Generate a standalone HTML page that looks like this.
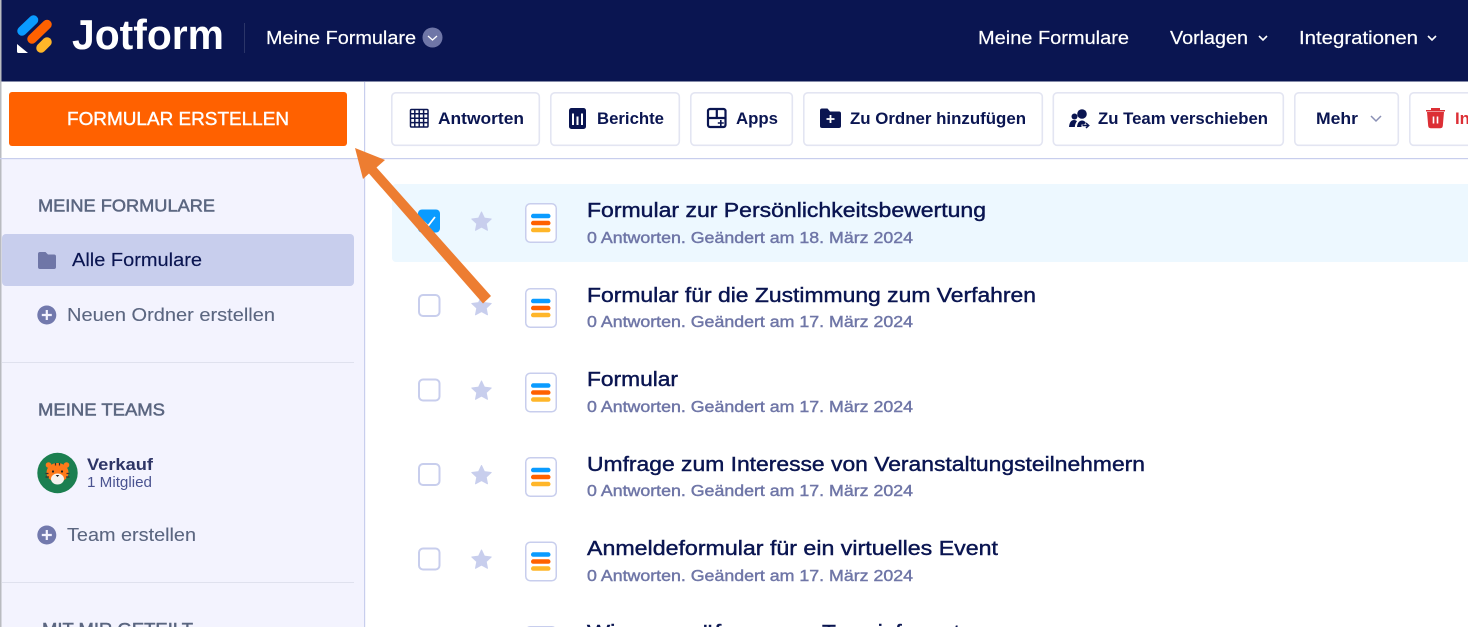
<!DOCTYPE html>
<html lang="de"><head><meta charset="utf-8"><title>Jotform</title>
<style>
html,body{margin:0;padding:0;width:1468px;height:627px;overflow:hidden;background:#fff}
svg{display:block;overflow:hidden}
text{font-family:"Liberation Sans",sans-serif}
.t{font-size:20px;fill:#0a1551;stroke:#0a1551;stroke-width:.42px}
.s{font-size:15.5px;fill:#6f76a7;stroke:#6f76a7;stroke-width:.42px}
.b{font-size:16.5px;fill:#0a1551;font-weight:700}
.n{font-size:18.5px;fill:#fff;stroke:#fff;stroke-width:.2px}
.h{font-size:17.5px;fill:#5b6680;stroke:#5b6680;stroke-width:.5px}
.l{font-size:18.5px;fill:#5b6680;stroke:#5b6680;stroke-width:.1px}
.btn{fill:#fff;stroke:#e3e5f2;stroke-width:1.6px}
</style></head><body>
<svg width="1468" height="627" viewBox="0 0 1468 627" xmlns="http://www.w3.org/2000/svg">
<defs>
<g id="form"><rect x=".75" y=".75" width="30.5" height="38.5" rx="4.500" fill="#fff" stroke="#c8ceed" stroke-width="1.500"/><rect x="6" y="10.800" width="19.500" height="4.500" rx="2.200" fill="#0a9bff"/><rect x="6" y="17.800" width="19.500" height="4.500" rx="2.200" fill="#ff6100"/><rect x="6" y="24.800" width="19.500" height="4.500" rx="2.200" fill="#ffb629"/></g>
<path id="star" d="M0-9.500 2.900-3.400 9.700-2.500 4.700 2.100 6 8.800 0 5.500-6 8.800-4.700 2.100-9.700-2.500-2.900-3.400Z" fill="#c8ceed" stroke="#c8ceed" stroke-width="1" stroke-linejoin="round"/>
<rect id="cb" x="1" y="1" width="20.500" height="21" rx="4" fill="#fff" stroke="#c8ceed" stroke-width="2"/>
<g id="plus"><circle r="9.500" fill="#7279ad"/><path d="M-5 0H5M0-5V5" stroke="#f3f3fe" stroke-width="2.200"/></g>
</defs>

<!-- sidebar -->
<rect x="0" y="159" width="365" height="468" fill="#f3f3fe"/>
<rect x="0" y="82" width="1.500" height="545" fill="#b9bbc0"/>
<rect x="364" y="82" width="1.200" height="545" fill="#c8ceed"/>
<rect x="0" y="158" width="1468" height="1.200" fill="#c8ceed"/>

<!-- header -->
<rect x="1.500" y="0" width="1467" height="81.500" fill="#0a1551"/>
<rect x="0" y="0" width="1.500" height="82" fill="#b9bbc0"/>
<g stroke-linecap="round" fill="none">
<path d="M22 31 33.500 20" stroke="#0a9bff" stroke-width="9.500"/>
<path d="M32 39 47 24.500" stroke="#ff6100" stroke-width="9.500"/>
<path d="M41 48 47 42" stroke="#ffb629" stroke-width="9.500"/>
</g>
<path d="M17 44 28 53H18.500Q17 53 17 51.500Z" fill="#fff"/>
<text x="72" y="49" font-size="42" font-weight="700" fill="#fff" textLength="152" lengthAdjust="spacingAndGlyphs">Jotform</text>
<rect x="244" y="23" width="1" height="30" fill="#2b3568"/>
<text class="n" x="266" y="44" textLength="150" lengthAdjust="spacingAndGlyphs">Meine Formulare</text>
<circle cx="432.500" cy="37.500" r="10" fill="#6f76a7"/>
<path d="M428 36l4.500 4 4.500-4" fill="none" stroke="#fff" stroke-width="1.300"/>
<text class="n" x="978" y="44" textLength="151" lengthAdjust="spacingAndGlyphs">Meine Formulare</text>
<text class="n" x="1170" y="44" textLength="78" lengthAdjust="spacingAndGlyphs">Vorlagen</text>
<path d="M1259 36l4 4 4-4" fill="none" stroke="#fff" stroke-width="1.600"/>
<text class="n" x="1299" y="44" textLength="119" lengthAdjust="spacingAndGlyphs">Integrationen</text>
<path d="M1428 36l4 4 4-4" fill="none" stroke="#fff" stroke-width="1.600"/>

<!-- create button -->
<rect x="9" y="92" width="338" height="54" rx="3" fill="#ff6100"/>
<text x="67" y="125" font-size="18.500" fill="#fff" stroke="#fff" stroke-width=".4" textLength="222" lengthAdjust="spacingAndGlyphs">FORMULAR ERSTELLEN</text>

<!-- toolbar -->
<rect class="btn" x="391.800" y="92.800" width="147.500" height="52.500" rx="4"/>
<rect class="btn" x="550.800" y="92.800" width="128.500" height="52.500" rx="4"/>
<rect class="btn" x="690.800" y="92.800" width="101.500" height="52.500" rx="4"/>
<rect class="btn" x="803.800" y="92.800" width="238.500" height="52.500" rx="4"/>
<rect class="btn" x="1053.300" y="92.800" width="230" height="52.500" rx="4"/>
<rect class="btn" x="1294.800" y="92.800" width="103.500" height="52.500" rx="4"/>
<rect class="btn" x="1409.800" y="92.800" width="80" height="52.500" rx="4"/>

<g fill="none" stroke="#0a1551" stroke-width="1.500"><rect x="410.500" y="109.500" width="17.500" height="17.500" rx="1"/><path d="M410 113.800h18M410 118.200h18M410 122.600h18M414.800 109v18M419.200 109v18M423.600 109v18"/></g>
<text class="b" x="438" y="124" textLength="86" lengthAdjust="spacingAndGlyphs">Antworten</text>

<rect x="569" y="108" width="17" height="21" rx="2.500" fill="#0a1551"/>
<path d="M573 113.500v11.500M577.500 116.500v8.500M582 113.500v11.500" stroke="#fff" stroke-width="2"/>
<text class="b" x="597" y="124" textLength="67" lengthAdjust="spacingAndGlyphs">Berichte</text>

<rect x="708" y="109" width="17.500" height="18" rx="2" fill="none" stroke="#0a1551" stroke-width="2.200"/>
<path d="M716.800 109v10M708 118h9M716.800 118h8.700" stroke="#0a1551" stroke-width="2.200"/>
<path d="M720.800 120v6M717.800 123h6" stroke="#0a1551" stroke-width="1.600"/>
<text class="b" x="736" y="124" textLength="42" lengthAdjust="spacingAndGlyphs">Apps</text>

<path d="M820 110.500a2 2 0 0 1 2-2h5.500l2.500 3h9a2 2 0 0 1 2 2V126a2 2 0 0 1-2 2h-17a2 2 0 0 1-2-2Z" fill="#0a1551"/>
<path d="M830.500 115v8M826.500 119h8" stroke="#fff" stroke-width="1.800"/>
<text class="b" x="850" y="124" textLength="176" lengthAdjust="spacingAndGlyphs">Zu Ordner hinzufügen</text>

<circle cx="1082" cy="114" r="4.800" fill="#0a1551"/>
<circle cx="1074.500" cy="116.500" r="3" fill="#0a1551"/>
<path d="M1069 127c.5-4.500 2-7 5-7 1.500 0 2.300.5 3 1.200-1.300 1.500-2 3.500-2.200 5.800ZM1077 127c.4-4 2.200-6.500 5-6.500 1.700 0 3 .8 3.800 2.200l-1.800 1.800h-2.500v2.500Z" fill="#0a1551"/>
<path d="M1082.500 125.500h5.500M1086 123l2.700 2.500-2.700 2.500" fill="none" stroke="#0a1551" stroke-width="1.500"/>
<text class="b" x="1098" y="124" textLength="170" lengthAdjust="spacingAndGlyphs">Zu Team verschieben</text>

<text class="b" x="1316" y="124" textLength="42" lengthAdjust="spacingAndGlyphs">Mehr</text>
<path d="M1371 116l5 5 5-5" fill="none" stroke="#8a90b5" stroke-width="1.500"/>

<path d="M1427 112h17l-1.200 14a2.500 2.500 0 0 1-2.500 2.200h-9.600a2.500 2.500 0 0 1-2.500-2.200Z" fill="#dc2f35"/>
<path d="M1426 110h19v1.500h-19ZM1431 108h9v2h-9Z" fill="#dc2f35"/>
<path d="M1433.500 116.500v7M1437.500 116.500v7" stroke="#fff" stroke-width="1.600"/>
<text x="1455" y="124" font-size="16.500" font-weight="700" fill="#dc2f35" textLength="15" lengthAdjust="spacingAndGlyphs">In</text>

<!-- sidebar content -->
<text class="h" x="38" y="211.500" textLength="177" lengthAdjust="spacingAndGlyphs">MEINE FORMULARE</text>
<rect x="2" y="234" width="352" height="52" rx="4" fill="#c8ceed"/>
<path d="M38 254a2 2 0 0 1 2-2h5.500l2.500 2.500h6a2 2 0 0 1 2 2V267a2 2 0 0 1-2 2H40a2 2 0 0 1-2-2Z" fill="#6f76a7"/>
<text x="72" y="266" font-size="18.500" fill="#0a1551" stroke="#0a1551" stroke-width=".15" textLength="130" lengthAdjust="spacingAndGlyphs">Alle Formulare</text>
<use href="#plus" x="46.800" y="315"/>
<text class="l" x="67" y="321" textLength="208" lengthAdjust="spacingAndGlyphs">Neuen Ordner erstellen</text>
<rect x="2" y="362" width="352" height="1" fill="#dfe1ee"/>
<text class="h" x="38" y="415.500" textLength="127" lengthAdjust="spacingAndGlyphs">MEINE TEAMS</text>

<circle cx="57.500" cy="473" r="20.200" fill="#1b7f50"/>
<g transform="translate(57.500 474)">
<circle cx="-9" cy="-9" r="2.800" fill="#ff7a1a"/><circle cx="9" cy="-9" r="2.800" fill="#ff7a1a"/>
<ellipse cx="0" cy="-1.500" rx="11" ry="9.500" fill="#ff7a1a"/>
<ellipse cx="0" cy="5" rx="6.500" ry="5.500" fill="#f6f2ee"/>
<circle cx="-4.500" cy="-2.500" r="1.100" fill="#222"/><circle cx="4.500" cy="-2.500" r="1.100" fill="#222"/>
<path d="M-1.800 1h3.600L0 3Z" fill="#222"/>
<path d="M-2-11v2.500M2-11v2.500M-12-.5h3M-12 3h3.500M9-.5h3M8.500 3h3.500" stroke="#333" stroke-width="1.200"/>
</g>
<text x="87" y="470" font-size="17" font-weight="700" fill="#2e3566" textLength="66" lengthAdjust="spacingAndGlyphs">Verkauf</text>
<text x="87" y="487" font-size="14.500" fill="#4a5390" textLength="65" lengthAdjust="spacingAndGlyphs">1 Mitglied</text>
<use href="#plus" x="46.800" y="535"/>
<text class="l" x="67" y="541" textLength="129" lengthAdjust="spacingAndGlyphs">Team erstellen</text>
<rect x="2" y="582" width="352" height="1" fill="#dfe1ee"/>
<text class="h" x="42" y="635" textLength="151" lengthAdjust="spacingAndGlyphs">MIT MIR GETEILT</text>

<!-- list -->
<path d="M1468 184H396a4 4 0 0 0-4 4v70a4 4 0 0 0 4 4h1072Z" fill="#edf8ff"/>
<rect x="418" y="209.500" width="22" height="23" rx="4" fill="#0a9bff"/>
<path d="M424 222l4 4 7-9" fill="none" stroke="#fff" stroke-width="1.800"/>
<use href="#star" x="481.500" y="221.500"/>
<use href="#form" x="525" y="203"/>
<text class="t" x="587" y="217" textLength="399" lengthAdjust="spacingAndGlyphs">Formular zur Persönlichkeitsbewertung</text>
<text class="s" x="587" y="243" textLength="326" lengthAdjust="spacingAndGlyphs">0 Antworten. Geändert am 18. März 2024</text>

<use href="#cb" x="418" y="294"/>
<use href="#star" x="481.500" y="306"/>
<use href="#form" x="525" y="288"/>
<text class="t" x="587" y="302" textLength="449" lengthAdjust="spacingAndGlyphs">Formular für die Zustimmung zum Verfahren</text>
<text class="s" x="587" y="327" textLength="326" lengthAdjust="spacingAndGlyphs">0 Antworten. Geändert am 17. März 2024</text>

<use href="#cb" x="418" y="378.500"/>
<use href="#star" x="481.500" y="390.500"/>
<use href="#form" x="525" y="372.500"/>
<text class="t" x="587" y="386" textLength="91" lengthAdjust="spacingAndGlyphs">Formular</text>
<text class="s" x="587" y="412" textLength="326" lengthAdjust="spacingAndGlyphs">0 Antworten. Geändert am 17. März 2024</text>

<use href="#cb" x="418" y="463"/>
<use href="#star" x="481.500" y="475"/>
<use href="#form" x="525" y="457"/>
<text class="t" x="587" y="471" textLength="558" lengthAdjust="spacingAndGlyphs">Umfrage zum Interesse von Veranstaltungsteilnehmern</text>
<text class="s" x="587" y="496" textLength="326" lengthAdjust="spacingAndGlyphs">0 Antworten. Geändert am 17. März 2024</text>

<use href="#cb" x="418" y="547.500"/>
<use href="#star" x="481.500" y="559.500"/>
<use href="#form" x="525" y="541.500"/>
<text class="t" x="587" y="555" textLength="411" lengthAdjust="spacingAndGlyphs">Anmeldeformular für ein virtuelles Event</text>
<text class="s" x="587" y="581" textLength="326" lengthAdjust="spacingAndGlyphs">0 Antworten. Geändert am 17. März 2024</text>

<use href="#form" x="525" y="626"/>
<text class="t" x="587" y="639" textLength="228" lengthAdjust="spacingAndGlyphs">Wissensprüfung zum</text>
<text class="t" x="822" y="639" textLength="138" lengthAdjust="spacingAndGlyphs">Teaminformat</text>

<!-- annotation arrow -->
<path d="M355 148 385 160 376.500 167.500 491 296 483 303.500 369 173.500 363 179Z" fill="#ed7d31"/>
</svg>
</body></html>
